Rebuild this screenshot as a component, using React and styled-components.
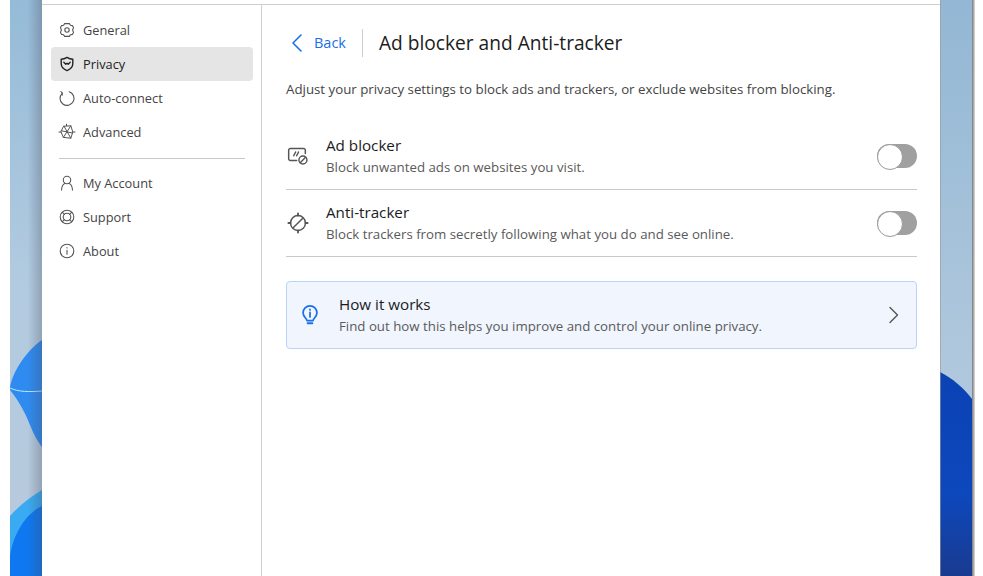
import React from "react";
import styled, { createGlobalStyle } from "styled-components";

const GlobalStyle = createGlobalStyle`
  html, body {
    margin: 0;
    padding: 0;
    background: #fff;
  }
  * {
    box-sizing: border-box;
  }
`;

const Desktop = styled.div`
  width: 983px;
  height: 576px;
  overflow: hidden;
  display: flex;
  padding-left: 10px;
  background: #fff;
  font-family: "Open Sans", "Noto Sans", sans-serif;
`;
const Wall = styled.div`
  width: 32px;
  height: 576px;
  flex: none;
  svg {
    display: block;
  }
`;
const RightShade = styled.div`
  width: 3px;
  height: 576px;
  flex: none;
  background: linear-gradient(90deg, #777, #ddd);
`;
const Window = styled.div`
  width: 898px;
  height: 576px;
  flex: none;
  display: flex;
  flex-direction: column;
  background: #fff;
  padding-top: 4px;
`;
const Body = styled.div`
  flex: 1;
  display: flex;
  border-top: 1px solid #cfcfcf;
`;
const Sidebar = styled.nav`
  width: 220px;
  flex: none;
  border-right: 1px solid #cfcfcf;
  padding: 8px 8px 0 9px;
`;
const NavItem = styled.div`
  height: 34px;
  display: flex;
  align-items: center;
  gap: 7px;
  padding-left: 7px;
  border-radius: 4px;
  font-size: 12.8px;
  color: ${(p) => (p.$active ? "#222" : "#444")};
  background: ${(p) => (p.$active ? "#e5e5e5" : "transparent")};
  svg {
    flex: none;
    color: ${(p) => (p.$active ? "#222" : "#555")};
  }
`;
const NavDivider = styled.div`
  height: 1px;
  background: #c9c9c9;
  margin: 9px 8px 7px 8px;
`;
const Main = styled.main`
  flex: 1;
  padding: 0 24px;
`;
const Header = styled.header`
  display: flex;
  align-items: center;
  height: 75px;
`;
const BackLink = styled.div`
  display: flex;
  align-items: center;
  gap: 11px;
  padding-left: 5px;
  padding-right: 16px;
  font-size: 14.5px;
  color: #1a6fe8;
`;
const Title = styled.h1`
  margin: 0;
  padding-left: 16px;
  height: 28px;
  line-height: 28px;
  border-left: 1px solid #cccccc;
  font-size: 19.15px;
  font-weight: 400;
  color: #1c1c1c;
`;
const Description = styled.p`
  margin: 0;
  height: 43px;
  line-height: 18px;
  font-size: 13.29px;
  color: #444;
`;
const Row = styled.div`
  height: 67px;
  display: flex;
  align-items: center;
  border-bottom: 1px solid #c9c9c9;
`;
const RowIcon = styled.div`
  width: 40px;
  flex: none;
  display: flex;
  color: #555;
`;
const RowText = styled.div`
  flex: 1;
`;
const RowTitle = styled.div`
  font-size: 15.2px;
  line-height: 20px;
  color: #1c1c1c;
`;
const RowSub = styled.div`
  font-size: 13.28px;
  line-height: 20px;
  margin-top: 2px;
  color: #5a5a5a;
`;
const Toggle = styled.div`
  width: 40px;
  height: 24px;
  flex: none;
  border-radius: 12px;
  background: #a0a0a0;
  &::before {
    content: "";
    display: block;
    width: 24px;
    height: 24px;
    border-radius: 50%;
    background: #fff;
    border: 1px solid #9a9a9a;
  }
`;
const InfoCard = styled.div`
  height: 68px;
  width: 631px;
  margin-top: 24px;
  display: flex;
  align-items: center;
  padding: 0 17px 0 11px;
  background: #f0f5fe;
  border: 1px solid #b9d3fb;
  border-radius: 4px;
`;
const CardIcon = styled.div`
  width: 41px;
  flex: none;
  display: flex;
  color: #1a6fe8;
`;
const CardChevron = styled.div`
  display: flex;
  flex: none;
  color: #555;
`;

const Icon = ({ size = 18, children, width = 1.2 }) => (
  <svg width={size} height={size} viewBox="0 0 18 18" fill="none" stroke="currentColor" strokeWidth={width} strokeLinecap="round" strokeLinejoin="round">
    {children}
  </svg>
);

const GearIcon = () => (
  <Icon width={1.1}>
    <path d="M6.600 2.600h4.800l1 1.700 2 .3 1.100 2-.9 2.400.9 2.400-1.100 2-2 .3-1 1.700H6.600l-1-1.700-2-.3-1.100-2 .9-2.400-.9-2.400 1.100-2 2-.3z" />
    <circle cx="9" cy="9" r="2.200" />
  </Icon>
);
const ShieldIcon = () => (
  <Icon width={1.4}>
    <path d="M9 2.400c2 1.300 3.900 1.800 5.800 1.900v4.300c0 3.400-2.400 5.800-5.800 7-3.400-1.200-5.800-3.600-5.800-7V4.300C5.100 4.200 7 3.700 9 2.400z" />
    <path d="M5.800 7.200 7.800 9.200 9 8.200l1.200 1 2-2" strokeWidth="1.3" />
  </Icon>
);
const RefreshIcon = () => (
  <Icon width={1.1}>
    <path d="M11.200 2.700a7 7 0 1 1-7 1.600" />
    <path d="M2.900 2.500l1.500 1.700-.2 2" />
  </Icon>
);
const AdvancedIcon = () => (
  <Icon width={1}>
    <path d="M6 3.200 12.800 2.800 14.800 9 12.800 15.200 5.400 14.400 3 9z" />
    <path d="M6 3.200 12.800 15.200M12.800 2.800 5.400 14.400M3.500 7.800 14.500 10M1 9h2M15 9h2M8.500 1.200v1.500" />
  </Icon>
);
const PersonIcon = () => (
  <Icon width={1.1}>
    <circle cx="9" cy="6" r="3.700" />
    <path d="M3.500 16c.2-3.500 1.800-6 3.300-6.600M14.500 16c-.2-3.500-1.800-6-3.300-6.600" />
  </Icon>
);
const SupportIcon = () => (
  <Icon width={1.1}>
    <circle cx="9" cy="9" r="6.800" />
    <circle cx="9" cy="9" r="3.800" />
    <path d="M4.400 4.400l2 2M13.600 4.400l-2 2M4.400 13.600l2-2M13.600 13.600l-2-2" />
  </Icon>
);
const InfoIcon = () => (
  <Icon width={1.1}>
    <circle cx="9" cy="9" r="6.800" />
    <path d="M9 8.200v4M9 5.500v.4" />
  </Icon>
);
const AdBlockIcon = () => (
  <Icon size={24} width={1.1}>
    <path d="M8 12.400H3.300a1.300 1.300 0 0 1-1.300-1.300V4.700a1.300 1.300 0 0 1 1.300-1.300h9.900a1.300 1.300 0 0 1 1.300 1.300v2.500" />
    <path d="M5.800 8.800l1.400-2.800M8 8.800l1.400-2.800" />
    <circle cx="12.700" cy="12" r="3" />
    <path d="M10.700 14l4-4" />
  </Icon>
);
const TrackerIcon = () => (
  <Icon size={24} width={1.1}>
    <circle cx="9" cy="9" r="5.600" />
    <path d="M5.600 12.400 12.400 5.600" />
    <path d="M9 1.800v1.600M9 14.600v1.600M1.800 9h1.600M14.600 9h1.600" strokeWidth="1.400" />
  </Icon>
);
const BulbIcon = () => (
  <Icon size={24} width={1.3}>
    <path d="M6.800 13.300c0-1.500-3-2.700-3-6a5.200 5.200 0 0 1 10.400 0c0 3.300-3 4.500-3 6z" />
    <path d="M7.300 15.200h3.400" strokeWidth="1.600" />
    <path d="M9 7v3.500M9 4.800v.4" strokeWidth="1.300" />
  </Icon>
);

const LeftWall = () => (
  <svg width="32" height="576" viewBox="0 0 32 576">
    <defs>
      <linearGradient id="leftSky" x1="0" y1="0" x2="0" y2="1">
        <stop offset="0" stopColor="#95bbd8" />
        <stop offset="0.5" stopColor="#b2cbe0" />
        <stop offset="1" stopColor="#b8c9dc" />
      </linearGradient>
      <linearGradient id="leftShade" x1="0" y1="0" x2="1" y2="0">
        <stop offset="0.55" stopColor="#445" stopOpacity="0" />
        <stop offset="1" stopColor="#445" stopOpacity="0.3" />
      </linearGradient>
    </defs>
    <rect width="32" height="576" fill="url(#leftSky)" />
    <path d="M32 340C15 352 3 372 0 387V390C8 400 14 410 20 425 24 435 28 442 32 447Z" fill="#2f8bf0" />
    <path d="M0 388C8 392 20 392 32 391" stroke="#bfeaff" strokeWidth="1" fill="none" />
    <path d="M32 490C20 497 8 507 0 516V576H32Z" fill="#3aaaf2" />
    <path d="M32 506C15 514 3 535 0 556V576H32Z" fill="#0f78f0" />
    <rect width="32" height="576" fill="url(#leftShade)" />
  </svg>
);

const RightWall = () => (
  <svg width="32" height="576" viewBox="0 0 32 576">
    <defs>
      <linearGradient id="rightSky" x1="0" y1="0" x2="0" y2="1">
        <stop offset="0" stopColor="#93b7d4" />
        <stop offset="0.65" stopColor="#b0c8dd" />
      </linearGradient>
      <linearGradient id="rightBlue" x1="0" y1="0" x2="0" y2="1">
        <stop offset="0" stopColor="#0b42b4" />
        <stop offset="0.6" stopColor="#0d48bc" />
        <stop offset="1" stopColor="#1a3a90" />
      </linearGradient>
    </defs>
    <rect width="32" height="576" fill="url(#rightSky)" />
    <path d="M0 372C12 378 24 388 32 399V576H0Z" fill="url(#rightBlue)" />
    <rect width="1" height="576" fill="#999" opacity="0.6" />
  </svg>
);

const primaryNav = [
  { label: "General", icon: <GearIcon /> },
  { label: "Privacy", icon: <ShieldIcon />, active: true },
  { label: "Auto-connect", icon: <RefreshIcon /> },
  { label: "Advanced", icon: <AdvancedIcon /> },
];
const secondaryNav = [
  { label: "My Account", icon: <PersonIcon /> },
  { label: "Support", icon: <SupportIcon /> },
  { label: "About", icon: <InfoIcon /> },
];

export default function App() {
  return (
    <Desktop>
      <GlobalStyle />
      <Wall>
        <LeftWall />
      </Wall>
      <Window>
        <Body>
          <Sidebar>
            {primaryNav.map((item) => (
              <NavItem key={item.label} $active={item.active}>
                {item.icon}
                {item.label}
              </NavItem>
            ))}
            <NavDivider />
            {secondaryNav.map((item) => (
              <NavItem key={item.label}>
                {item.icon}
                {item.label}
              </NavItem>
            ))}
          </Sidebar>
          <Main>
            <Header>
              <BackLink>
                <svg width="12" height="20" viewBox="0 0 12 20" fill="none" stroke="currentColor" strokeWidth="1.6" strokeLinecap="round" strokeLinejoin="round">
                  <path d="M10 2 2 10l8 8" />
                </svg>
                Back
              </BackLink>
              <Title>Ad blocker and Anti-tracker</Title>
            </Header>
            <Description>Adjust your privacy settings to block ads and trackers, or exclude websites from blocking.</Description>
            <Row>
              <RowIcon>
                <AdBlockIcon />
              </RowIcon>
              <RowText>
                <RowTitle>Ad blocker</RowTitle>
                <RowSub>Block unwanted ads on websites you visit.</RowSub>
              </RowText>
              <Toggle />
            </Row>
            <Row>
              <RowIcon>
                <TrackerIcon />
              </RowIcon>
              <RowText>
                <RowTitle>Anti-tracker</RowTitle>
                <RowSub>Block trackers from secretly following what you do and see online.</RowSub>
              </RowText>
              <Toggle />
            </Row>
            <InfoCard>
              <CardIcon>
                <BulbIcon />
              </CardIcon>
              <RowText>
                <RowTitle>How it works</RowTitle>
                <RowSub>Find out how this helps you improve and control your online privacy.</RowSub>
              </RowText>
              <CardChevron>
                <svg width="11" height="18" viewBox="0 0 11 18" fill="none" stroke="currentColor" strokeWidth="1.4" strokeLinecap="round" strokeLinejoin="round">
                  <path d="M2 1.500 9.500 9 2 16.500" />
                </svg>
              </CardChevron>
            </InfoCard>
          </Main>
        </Body>
      </Window>
      <Wall>
        <RightWall />
      </Wall>
      <RightShade />
    </Desktop>
  );
}
